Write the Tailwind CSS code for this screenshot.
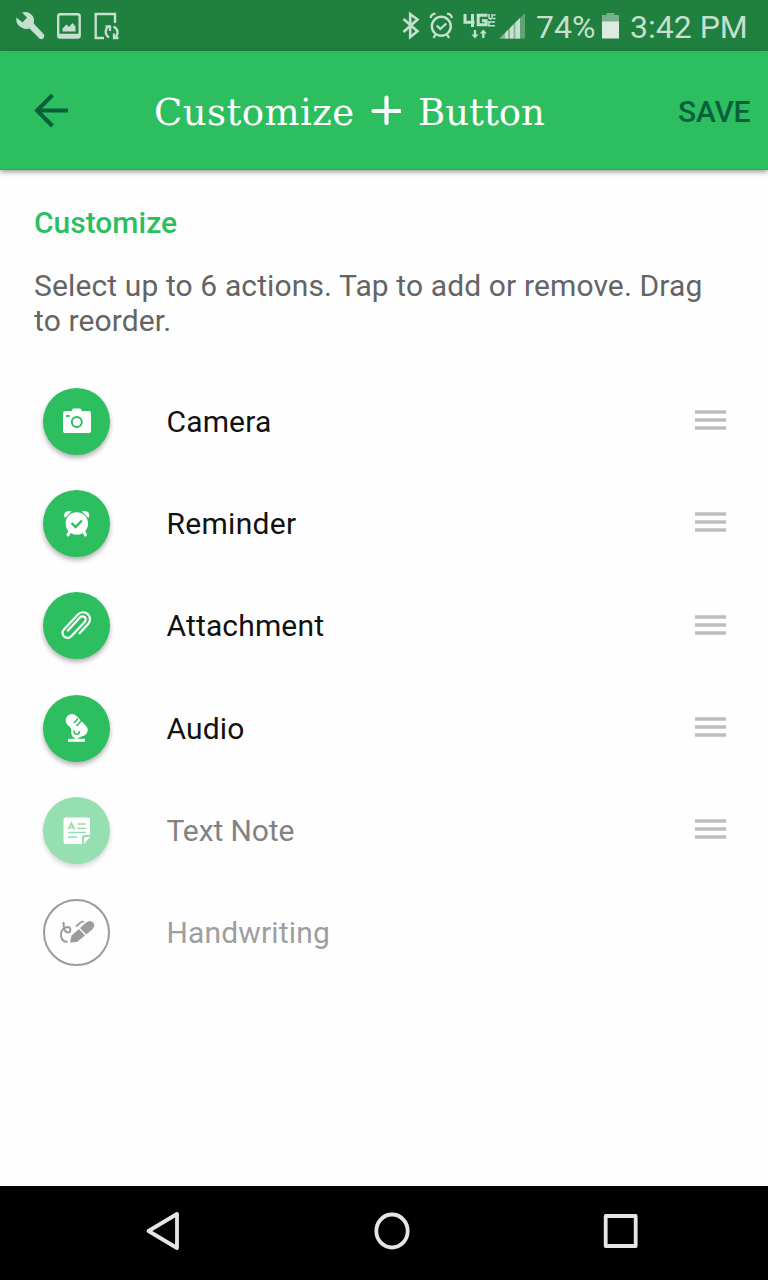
<!DOCTYPE html>
<html lang="en">
<head>
<meta charset="utf-8">
<meta name="viewport" content="width=device-width">
<title>Customize + Button</title>
<script src="https://cdn.jsdelivr.net/npm/@tailwindcss/browser@4"></script>
</head>
<body class="bg-white">
<div class="flex h-[1280px] w-[768px] flex-col overflow-hidden bg-white font-[Roboto,sans-serif] text-[30px] leading-[35px]">

  <!-- Status bar -->
  <div class="flex h-[51px] shrink-0 items-start bg-[#1f803f] text-[#c7dfcf]">
    <svg class="h-[51px] w-[130px]" viewBox="0 0 130 51" fill="none" stroke="currentColor">
      <path d="M22 12.5c4.500-1.800 9.500.500 11.300 4.500 1 2.300.900 4.300.300 6.500l10 10.500c2 3-1 6.500-4 4.800L29.500 28.500c-4.500 1.300-8.500-.500-11.300-3.500-1.700-2-2.300-5-1.700-7.500l6 5 4.500-5z" fill="currentColor" stroke="none"/>
      <rect x="58.200" y="14.200" width="21.500" height="23.300" rx="2" stroke-width="2.400"/>
      <path d="M58 35.500h22" stroke-width="3.500"/>
      <path d="M62.500 31.500v-3l4-4 2.500 2.500 3.500-4 3 3.500v5z" fill="currentColor" stroke="none"/>
      <path d="M115 23v-9H95.700v24H104" stroke-width="2.400"/>
      <path d="M109 37.500c-4-2.500-4.500-8-.500-11.500M105.500 26.500h4.500v4.500M113.500 26.500c5 2.500 5.500 8 1 11.500M118.500 38H114v-4.500" stroke-width="2.300"/>
    </svg>
    <div class="grow"></div>
    <svg class="h-[51px] w-[136px]" viewBox="396 0 136 51" fill="none" stroke="currentColor">
      <path d="M403.500 19l14 12.300-7.300 5.700V14l7.300 5.500-14 12.500" stroke-width="2.600"/>
      <circle cx="441.300" cy="26.300" r="9.500" stroke-width="2.400"/>
      <path d="M436.800 25.500l3.500 3.500 6-5.500M430.500 18c.500-2.500 2.500-4 5-4.300M452 18c-.500-2.500-2.500-4-5-4.300M435.500 34.500l-2 3.500M447 34.500l2 3.500" stroke-width="2.300"/>
      <path d="M465 14v8.300h9.500M472.500 14v13" stroke-width="3"/>
      <path d="M487.500 15.300h-9.300v9.500h8v-4H482" stroke-width="3"/>
      <path d="M489 14v4l1.500 1 1.500-1v-4M495.500 15H493M495.500 18.500H493M488 22h7M488 25.800h7M489 22v4" stroke-width="1.500"/>
      <path d="M475 30v6M483.300 38v-6" stroke-width="2.300"/>
      <path d="M471.500 34.500h7l-3.500 4zM479.800 33.500h7l-3.500-4z" fill="currentColor" stroke="none"/>
      <path d="M499.500 38.500L525 13v25.500z" fill="#5fa377" stroke="none"/>
      <path d="M499.500 38.500L520 18v20.500z" fill="#87b899" stroke="none"/>
      <path d="M505 38.500V33l3-3v8.500zM510 38.500V28l3.500-3.500v14zM515.500 38.500v-16L520 18v20.500z" fill="currentColor" stroke="none"/>
    </svg>
    <div class="w-[66px] pl-[4px] pt-[9px] text-[32px] leading-[36px]">74%</div>
    <svg class="h-[51px] w-[30px]" viewBox="598 0 30 51">
      <path d="M602 15h4.500v-2h8v2h4.500v7h-17z" fill="#77b08b"/>
      <path d="M602 21.500h17v17h-17z" fill="#dceae1"/>
    </svg>
    <div class="w-[140px] pl-[2px] pt-[9px] text-[32px] leading-[36px]">3:42 PM</div>
  </div>

  <!-- Toolbar -->
  <div class="relative z-10 flex h-[119px] shrink-0 items-center border-b border-[#17b259] bg-[#2dbe60] shadow-[0_2px_5px_rgba(0,0,0,0.4)]">
    <svg class="ml-[34px] h-[36px] w-[36px]" viewBox="0 0 36 36" fill="none" stroke="#07603b" stroke-width="4"><path d="M34 18.500H4M18.500 3L3 18.500 18.500 34"/></svg>
    <h1 class="ml-[84px] flex w-[524px] items-center font-['DejaVu_Serif',serif] text-[37px] leading-[44px] text-white">
      <span class="w-[217px] pt-[6px] tracking-[0.450px]">Customize</span>
      <svg class="h-[30px] w-[30px] shrink-0" viewBox="0 0 30 30" stroke="#fff" stroke-width="4.200" stroke-linecap="round"><path d="M2.500 16h26M15.500 2.500v25.500"/></svg>
      <span class="ml-[17px] pt-[6px]">Button</span>
    </h1>
    <div class="pt-[2px] font-medium tracking-[-0.200px] text-[#07603b]">SAVE</div>
  </div>

  <!-- Content -->
  <div class="grow bg-[#fefefe] pt-[35px]">
    <h2 class="pl-[34px] font-medium text-[#2dbe60]">Customize</h2>
    <p class="mt-[28px] w-[734px] pl-[34px] tracking-[0.120px] text-[#646464]">Select up to 6 actions. Tap to add or remove. Drag<br>to reorder.</p>

    <ul class="mt-[32px] tracking-[0.150px] text-[#111]">
      <li class="flex h-[102.300px] items-center pl-[43px]">
        <svg class="h-[67px] w-[67px] rounded-full bg-[#2dbe60] shadow-[0_3px_5px_rgba(0,0,0,0.3)]" viewBox="0 0 67 67">
          <path d="M22 23h6.500l1.500-2.500h7.500L39 23h7q2 0 2 2v18q0 2-2 2H22q-2 0-2-2V25q0-2 2-2z" fill="#fff"/>
          <circle cx="33.800" cy="34" r="5" fill="none" stroke="#2dbe60" stroke-width="2"/>
          <path d="M23 28h3.500" stroke="#2dbe60" stroke-width="2"/>
        </svg>
        <span class="ml-[56.500px] grow">Camera</span>
        <svg class="mr-[42px] h-[24px] w-[31px]" viewBox="0 0 31 24" stroke="#bdbdbd" stroke-width="3.400"><path d="M0 3h31M0 11h31M0 19h31"/></svg>
      </li>
      <li class="flex h-[102.300px] items-center pl-[43px]">
        <svg class="h-[67px] w-[67px] rounded-full bg-[#2dbe60] shadow-[0_3px_5px_rgba(0,0,0,0.3)]" viewBox="0 0 67 67">
          <circle cx="33.800" cy="33.500" r="11.200" fill="#fff"/>
          <path d="M22 28c-2.500-4 1-8.500 6.500-6.500zM45.500 28c2.500-4-1-8.500-6.500-6.500z" fill="#fff"/>
          <path d="M27 41l-2 4M40.500 41l2 4" stroke="#fff" stroke-width="3" stroke-linecap="round"/>
          <path d="M28.500 33l4 4 6.500-6.500" fill="none" stroke="#2dbe60" stroke-width="2.400"/>
        </svg>
        <span class="ml-[56.500px] grow tracking-[0.300px]">Reminder</span>
        <svg class="mr-[42px] h-[24px] w-[31px]" viewBox="0 0 31 24" stroke="#bdbdbd" stroke-width="3.400"><path d="M0 3h31M0 11h31M0 19h31"/></svg>
      </li>
      <li class="flex h-[102.300px] items-center pl-[43px]">
        <svg class="h-[67px] w-[67px] rounded-full bg-[#2dbe60] shadow-[0_3px_5px_rgba(0,0,0,0.3)]" viewBox="0 0 67 67">
          <path transform="translate(33.500 33.500) rotate(-47)" d="M-3.500 7.500H9a7 7 0 0 0 0-14H-11.500a5 5 0 0 0 0 10H8.500a3.200 3.200 0 0 0 0-6.400H-9.500" fill="none" stroke="#fff" stroke-width="2.200" stroke-linecap="round"/>
        </svg>
        <span class="ml-[56.500px] grow">Attachment</span>
        <svg class="mr-[42px] h-[24px] w-[31px]" viewBox="0 0 31 24" stroke="#bdbdbd" stroke-width="3.400"><path d="M0 3h31M0 11h31M0 19h31"/></svg>
      </li>
      <li class="flex h-[102.300px] items-center pl-[43px]">
        <svg class="h-[67px] w-[67px] rounded-full bg-[#2dbe60] shadow-[0_3px_5px_rgba(0,0,0,0.3)]" viewBox="0 0 67 67">
          <path d="M29 25.300L38.500 35" stroke="#fff" stroke-width="12.500" stroke-linecap="round"/>
          <path d="M28.500 32c-1 8 .5 11 5 11s8-3 9-7v-3z" fill="#fff"/>
          <path d="M33.500 41v4M25 45.300h17" stroke="#fff" stroke-width="3"/>
          <path d="M31 28l4-4.500M33.500 31l5-5.500M31 35.500c0 5 5.500 5 5.500.500" fill="none" stroke="#2dbe60" stroke-width="1.600"/>
        </svg>
        <span class="ml-[56.500px] grow">Audio</span>
        <svg class="mr-[42px] h-[24px] w-[31px]" viewBox="0 0 31 24" stroke="#bdbdbd" stroke-width="3.400"><path d="M0 3h31M0 11h31M0 19h31"/></svg>
      </li>
      <li class="flex h-[102.300px] items-center pl-[43px]">
        <svg class="h-[67px] w-[67px] rounded-full bg-[#96dfb0] shadow-[0_3px_5px_rgba(0,0,0,0.16)]" viewBox="0 0 67 67">
          <path d="M22.500 20.500h22.500q2 0 2 2V38h-5.500q-2.500 0-2.500 2.500v6.500H22.500q-2 0-2-2V22.500q0-2 2-2z" fill="#fff"/>
          <path d="M41 47v-5q0-2 2-2h4z" fill="#fff"/>
          <path d="M25.500 32.500l3-6.500 3 6.500M26.500 30.500h4M34.500 27h8.500M34.500 31.500h8.500M25 35.500h18M25 40h9" fill="none" stroke="#96dfb0" stroke-width="1.700"/>
        </svg>
        <span class="ml-[56.500px] grow tracking-[-0.100px] text-[#828282]">Text Note</span>
        <svg class="mr-[42px] h-[24px] w-[31px]" viewBox="0 0 31 24" stroke="#bdbdbd" stroke-width="3.400"><path d="M0 3h31M0 11h31M0 19h31"/></svg>
      </li>
      <li class="flex h-[102.300px] items-center pl-[43px]">
        <svg class="h-[67px] w-[67px]" viewBox="0 0 67 67">
          <circle cx="33.500" cy="33.500" r="32.500" fill="none" stroke="#9b9b9b" stroke-width="2"/>
          <path d="M27 43.500l1.500-7 7.500-6.500 6 6.500-8 6.500zM37 29l5-4.500c3-3 6.500-2.500 8-1 1.900 2 1.700 4.500-.8 7l-6 5z" fill="#9b9b9b"/>
          <path d="M33 27.500l5-4.500q1.500-1 3 0" fill="none" stroke="#9b9b9b" stroke-width="1.700"/>
          <path d="M20.500 23c0 5 1 10.500 4.500 10.500 3.500-.500 3-5.500-.500-5.500-5 .500-7.500 5.500-6.300 10 .800 3 3 5 6.300 4.800" fill="none" stroke="#9b9b9b" stroke-width="2"/>
        </svg>
        <span class="ml-[56.500px] grow text-[#9e9e9e]">Handwriting</span>
      </li>
    </ul>
  </div>

  <!-- Navigation bar -->
  <div class="flex h-[94px] shrink-0 items-start bg-black">
    <svg class="h-[94px] w-full" viewBox="0 0 768 94" fill="none" stroke="#e6e6e6" stroke-width="3.800" stroke-linejoin="round">
      <path d="M148 45l28.500-17v34z" transform="translate(.500 0)"/>
      <ellipse cx="392" cy="45" rx="15.700" ry="16.500"/>
      <rect x="605.700" y="30" width="30" height="30"/>
    </svg>
  </div>
</div>
</body>
</html>
